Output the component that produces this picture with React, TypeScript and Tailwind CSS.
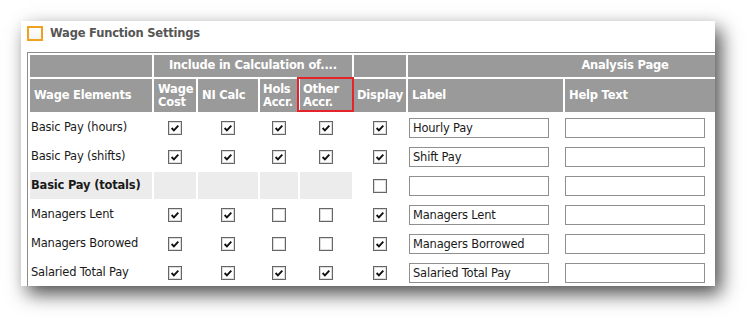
import React from 'react';

type Row = {
  name: string;
  checks: boolean[];
  display: boolean;
  label: string;
  total?: boolean;
};

const rows: Row[] = [
  { name: 'Basic Pay (hours)', checks: [true, true, true, true], display: true, label: 'Hourly Pay' },
  { name: 'Basic Pay (shifts)', checks: [true, true, true, true], display: true, label: 'Shift Pay' },
  { name: 'Basic Pay (totals)', checks: [], display: false, label: '', total: true },
  { name: 'Managers Lent', checks: [true, true, false, false], display: true, label: 'Managers Lent' },
  { name: 'Managers Borowed', checks: [true, true, false, false], display: true, label: 'Managers Borrowed' },
  { name: 'Salaried Total Pay', checks: [true, true, true, true], display: true, label: 'Salaried Total Pay' },
];

const Check: React.FC<{ checked: boolean }> = ({ checked }) => (
  <span className="w-[14px] h-[14px] border border-[#666] bg-white shadow-[inset_0_0_0_1px_#dcdcdc] flex items-center justify-center">
    {checked && (
      <svg width="12" height="12" viewBox="0 0 12 12">
        <path d="M2.6 6 L4.9 8.3 L9.3 3.6" fill="none" stroke="#111" strokeWidth="1.9" />
      </svg>
    )}
  </span>
);

const TextBox: React.FC<{ value: string }> = ({ value }) => (
  <div className="w-[140px] h-[20px] border border-[#8f8f8f] bg-white pl-[3px] text-[11.5px] tracking-[-0.2px] leading-[18px] text-[#1a1a1a] whitespace-nowrap">
    {value}
  </div>
);

const head = 'bg-[#9a9a9a] text-white font-bold text-[11.5px] tracking-[-0.2px]';

export default function App() {
  return (
    <div className="min-h-screen bg-white pt-[21px] pl-[21px] font-['DejaVu_Sans',sans-serif]">
      <div className="w-[694px] h-[265px] overflow-hidden bg-white shadow-[6px_8px_18px_rgba(0,0,0,0.7)] pl-[6px] pt-[5px]">
        {/* title */}
        <div className="h-[26px] flex items-start gap-[7px]">
          <span className="w-[16px] h-[15px] border-2 border-[#eea21f] bg-gradient-to-b from-white to-[#f3f3f3]" />
          <span className="text-[11.5px] tracking-[-0.2px] leading-[15px] font-bold text-[#555]">Wage Function Settings</span>
        </div>

        <div className="w-max border border-[#8c8c8c] p-[2px]">
          <div className="grid grid-cols-[122px_42px_60px_38px_52px_52px_155px_277px] grid-rows-[22px_33px_repeat(6,27px)] gap-[2px]">
            {/* header row 1 */}
            <div className={head} />
            <div className={`${head} col-span-4 flex items-center justify-center`}>Include in Calculation of....</div>
            <div className={head} />
            <div className={`${head} col-span-2 flex items-center justify-center`}>Analysis Page</div>

            {/* header row 2 */}
            <div className={`${head} flex items-center pl-[4px]`}>Wage Elements</div>
            <div className={`${head} flex items-center pl-[4px] leading-[13px]`}>Wage<br />Cost</div>
            <div className={`${head} flex items-center pl-[4px]`}>NI Calc</div>
            <div className={`${head} flex items-center pl-[3px] leading-[13px]`}>Hols<br />Accr.</div>
            <div className={`${head} relative flex items-center pl-[3px] leading-[13px]`}>
              Other<br />Accr.
              <span className="absolute -left-[3px] -right-[2px] -top-[2px] bottom-0 border-2 border-[#e4232b]" />
            </div>
            <div className={`${head} flex items-center pl-[3px]`}>Display</div>
            <div className={`${head} flex items-center pl-[4px]`}>Label</div>
            <div className={`${head} flex items-center pl-[4px]`}>Help Text</div>

            {/* body */}
            {rows.map((r) => (
              <React.Fragment key={r.name}>
                <div
                  className={`flex items-center pl-[1px] text-[11.5px] tracking-[-0.2px] text-[#1a1a1a] whitespace-nowrap ${
                    r.total ? 'bg-[#ececec] font-bold' : ''
                  }`}
                >
                  {r.name}
                </div>
                {[0, 1, 2, 3].map((i) =>
                  r.total ? (
                    <div key={i} className="bg-[#ececec]" />
                  ) : (
                    <div key={i} className="flex items-center justify-center">
                      <Check checked={r.checks[i]} />
                    </div>
                  )
                )}
                <div className="flex items-center justify-center">
                  <Check checked={r.display} />
                </div>
                <div className="flex items-center pl-[1px]">
                  <TextBox value={r.label} />
                </div>
                <div className="flex items-center">
                  <TextBox value="" />
                </div>
              </React.Fragment>
            ))}
          </div>
        </div>
      </div>
    </div>
  );
}
